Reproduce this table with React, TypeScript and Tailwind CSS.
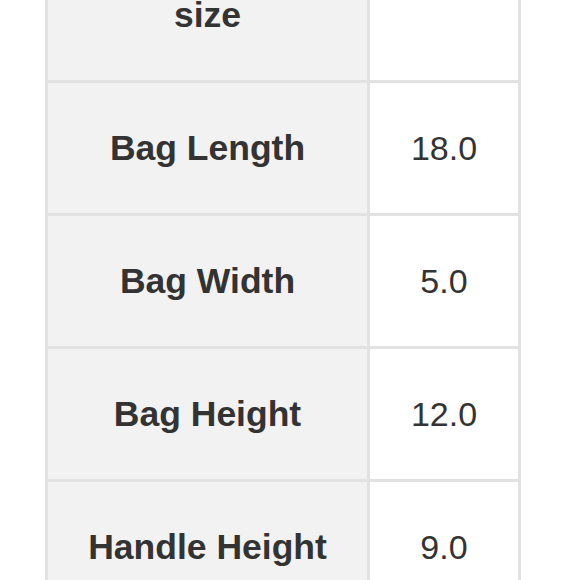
const rows = [
  { label: ["Bag", "size"], value: "" },
  { label: ["Bag Length"], value: "18.0" },
  { label: ["Bag Width"], value: "5.0" },
  { label: ["Bag Height"], value: "12.0" },
  { label: ["Handle Height"], value: "9.0" },
  { label: ["Strap Drop"], value: "22.0" },
];

export default function App() {
  return (
    <div className="h-[580px] w-[580px] overflow-hidden bg-white font-['Liberation_Sans',Arial,sans-serif] text-[#333]">
      <div className="ml-[45px] -mt-[93px] grid w-[476px] grid-cols-[319px_148px] gap-[3px] bg-[#e2e2e2] p-[3px]">
        {rows.map((row, i) => (
          <div key={i} className="contents">
            <div className="flex flex-col items-center justify-center bg-[#f2f2f2] py-[45px] text-[35.5px] font-bold leading-[40px]">
              {row.label.map((l) => (
                <span key={l}>{l}</span>
              ))}
            </div>
            <div className="flex items-center justify-center bg-white py-[45px] text-[34px] leading-[40px]">
              {row.value}
            </div>
          </div>
        ))}
      </div>
    </div>
  );
}
